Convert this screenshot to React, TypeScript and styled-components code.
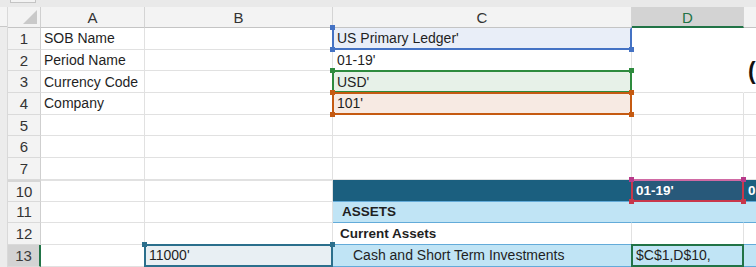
import styled, { createGlobalStyle } from 'styled-components'

const GlobalStyle = createGlobalStyle`
  html, body {
    margin: 0;
    padding: 0;
    background: #ffffff;
    overflow: hidden;
  }
  body {
    font-family: 'Liberation Sans', Arial, sans-serif;
    color: #1f1f1f;
  }
`

const Window = styled.div`
  width: 756px;
  height: 267px;
  overflow: hidden;
  display: flex;
  flex-direction: column;
  background: #fff;
`

const TopStrip = styled.div`
  height: 7px;
  flex-shrink: 0;
  background: #e9e9e9;
`

const TabStub = styled.div`
  width: 24px;
  height: 2px;
  margin-left: 10px;
  border: 1px solid #c4c4c4;
  border-top: none;
  background: #f3f3f3;
`

const Body = styled.div`
  display: flex;
  flex: 1;
`

const SideStrip = styled.div`
  width: 7px;
  flex-shrink: 0;
  background: #ececec;
  border-right: 1px solid #d9d9d9;
`

const SideStub = styled.div`
  height: 19px;
  border-bottom: 1px solid #c8c8c8;
  background: #f4f4f4;
`

const Sheet = styled.div`
  display: grid;
  grid-template-columns: 33px 104px 188px 299px 112px 60px;
  grid-template-rows: 21px repeat(11, 21.7px);
  font-size: 14px;
`

const Corner = styled.div`
  position: relative;
  box-sizing: border-box;
  background: #f3f3f3;
  border-right: 1px solid #d0d0d0;
  border-bottom: 1px solid #c4c4c4;
  &::after {
    content: '';
    position: absolute;
    right: 3px;
    bottom: 3px;
    width: 0;
    height: 0;
    border-left: 14px solid transparent;
    border-bottom: 14px solid #c9c9c9;
  }
`

const ColHead = styled.div<{ $active?: boolean }>`
  box-sizing: border-box;
  display: flex;
  align-items: center;
  justify-content: center;
  font-size: 15px;
  background: ${p => (p.$active ? '#d3d3d3' : '#f3f3f3')};
  color: ${p => (p.$active ? '#217346' : '#333')};
  border-right: 1px solid #d4d4d4;
  border-bottom: ${p => (p.$active ? '2px solid #217346' : '1px solid #c4c4c4')};
  padding-top: 1px;
`

const RowHead = styled.div<{ $active?: boolean; $hiddenAbove?: boolean }>`
  box-sizing: border-box;
  display: flex;
  align-items: center;
  justify-content: center;
  font-size: 15px;
  background: ${p => (p.$active ? '#d3d3d3' : '#f3f3f3')};
  color: ${p => (p.$active ? '#3b3b3b' : '#333')};
  border-right: ${p => (p.$active ? '2px solid #217346' : '1px solid #cfcfcf')};
  border-bottom: 1px solid #dadada;
  border-top: ${p => (p.$hiddenAbove ? '2px solid #d6d6d6' : 'none')};
`

const Cell = styled.div<{
  $bg?: string
  $vline?: string
  $hline?: string
  $pad?: number
  $bold?: boolean
  $color?: string
  $hiddenAbove?: boolean
}>`
  position: relative;
  box-sizing: border-box;
  display: flex;
  align-items: center;
  white-space: nowrap;
  padding-left: ${p => p.$pad ?? 3}px;
  background: ${p => p.$bg ?? '#fff'};
  color: ${p => p.$color ?? '#1f1f1f'};
  font-weight: ${p => (p.$bold ? 700 : 400)};
  font-size: ${p => (p.$bold ? '13.5px' : '14px')};
  border-right: 1px solid ${p => p.$vline ?? '#e1e1e1'};
  border-bottom: 1px solid ${p => p.$hline ?? '#e1e1e1'};
  border-top: ${p => (p.$hiddenAbove ? '1px solid #e1e1e1' : 'none')};
`

const Merged = styled(Cell)<{ $rows: number }>`
  grid-row: span ${p => p.$rows};
  align-items: flex-end;
  padding-bottom: 9px;
  overflow: hidden;
`

const TitleText = styled.span`
  font-size: 23px;
  font-weight: 700;
  color: #111;
  line-height: 1;
`

const Range = styled.span<{ $color: string; $top?: string; $noTop?: boolean }>`
  position: absolute;
  z-index: 2;
  left: -1px;
  right: -1px;
  top: -1px;
  bottom: -1px;
  border: 2px solid ${p => p.$color};
  border-top-color: ${p => (p.$noTop ? 'transparent' : p.$top ?? p.$color)};
  pointer-events: none;
`

const Handle = styled.span<{ $color: string; $v: 'top' | 'bottom'; $h: 'left' | 'right' }>`
  position: absolute;
  width: 5px;
  height: 5px;
  background: ${p => p.$color};
  ${p => p.$v}: -4px;
  ${p => p.$h}: -4px;
`

const BLUE = '#4472c4'
const GREEN = '#2e8b3e'
const ORANGE = '#c55a11'
const BAND = '#1b5f7f'
const LIGHT = '#c0e4f5'
const BANDLINE = '#63abd9'

const App = () => {
  return (
    <Window>
      <GlobalStyle />
      <TopStrip>
        <TabStub />
      </TopStrip>
      <Body>
        <SideStrip>
          <SideStub />
        </SideStrip>
        <Sheet>
          <Corner />
          <ColHead>A</ColHead>
          <ColHead>B</ColHead>
          <ColHead>C</ColHead>
          <ColHead $active>D</ColHead>
          <ColHead />

          <RowHead>1</RowHead>
          <Cell>SOB Name</Cell>
          <Cell />
          <Cell $bg="#e9eef8" $pad={4}>
            US Primary Ledger'
            <Range $color={BLUE} $noTop>
              <Handle $color={BLUE} $v="top" $h="left" />
              <Handle $color={BLUE} $v="bottom" $h="left" />
              <Handle $color={BLUE} $v="bottom" $h="right" />
            </Range>
          </Cell>
          <Merged $rows={3} $vline="#fff" />
          <Merged $rows={3} $pad={4}>
            <TitleText>(</TitleText>
          </Merged>

          <RowHead>2</RowHead>
          <Cell>Period Name</Cell>
          <Cell />
          <Cell $pad={4}>01-19'</Cell>

          <RowHead>3</RowHead>
          <Cell>Currency Code</Cell>
          <Cell />
          <Cell $bg="#e7f1e8" $pad={4}>
            USD'
            <Range $color={GREEN}>
              <Handle $color={GREEN} $v="top" $h="left" />
              <Handle $color={GREEN} $v="top" $h="right" />
            </Range>
          </Cell>

          <RowHead>4</RowHead>
          <Cell>Company</Cell>
          <Cell />
          <Cell $bg="#f7eae3" $pad={4}>
            101'
            <Range $color={ORANGE}>
              <Handle $color={ORANGE} $v="top" $h="left" />
              <Handle $color={ORANGE} $v="top" $h="right" />
              <Handle $color={ORANGE} $v="bottom" $h="left" />
              <Handle $color={ORANGE} $v="bottom" $h="right" />
            </Range>
          </Cell>
          <Cell />
          <Cell />

          {['5', '6', '7'].map(n => (
            <>
              <RowHead key={n}>{n}</RowHead>
              <Cell />
              <Cell />
              <Cell />
              <Cell />
              <Cell />
            </>
          ))}

          <RowHead $hiddenAbove>10</RowHead>
          <Cell $hiddenAbove />
          <Cell $hiddenAbove />
          <Cell $bg={BAND} $vline={BAND} $hline={BANDLINE} />
          <Cell $bg="#28597a" $vline={BAND} $hline={BANDLINE} $bold $color="#fff" $pad={4}>
            01-19'
            <Range $color="#c8374a" $top="#d06aa4">
              <Handle $color="#b83a8a" $v="top" $h="left" />
              <Handle $color="#b83a8a" $v="top" $h="right" />
              <Handle $color="#c8374a" $v="bottom" $h="left" />
              <Handle $color="#c8374a" $v="bottom" $h="right" />
            </Range>
          </Cell>
          <Cell $bg={BAND} $vline={BAND} $hline={BANDLINE} $bold $color="#fff" $pad={4}>
            01-19'
          </Cell>

          <RowHead>11</RowHead>
          <Cell />
          <Cell />
          <Cell $bg={LIGHT} $vline={LIGHT} $hline={BANDLINE} $bold $pad={9}>
            ASSETS
          </Cell>
          <Cell $bg={LIGHT} $vline={LIGHT} $hline={BANDLINE} />
          <Cell $bg={LIGHT} $vline={LIGHT} $hline={BANDLINE} />

          <RowHead>12</RowHead>
          <Cell />
          <Cell />
          <Cell $hline={BANDLINE} $bold $pad={7}>
            Current Assets
          </Cell>
          <Cell $hline={BANDLINE} />
          <Cell $hline={BANDLINE} />

          <RowHead $active>13</RowHead>
          <Cell />
          <Cell $bg="#e8eff3" $pad={4}>
            11000'
            <Range $color="#2b6f8c">
              <Handle $color="#2b6f8c" $v="top" $h="left" />
              <Handle $color="#2b6f8c" $v="top" $h="right" />
            </Range>
          </Cell>
          <Cell $bg={LIGHT} $vline={LIGHT} $hline={BANDLINE} $pad={20}>
            Cash and Short Term Investments
          </Cell>
          <Cell $bg={LIGHT} $vline={LIGHT} $hline={BANDLINE} $pad={4}>
            $C$1,D$10,
            <Range $color="#217346" />
          </Cell>
          <Cell $bg={LIGHT} $vline={LIGHT} $hline={BANDLINE} />
        </Sheet>
      </Body>
    </Window>
  )
}

export default App
